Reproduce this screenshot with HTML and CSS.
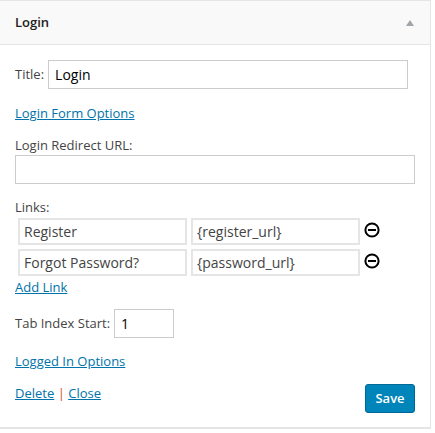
FILE: index.html
```html
<!DOCTYPE html>
<html lang="en">
<head>
<meta charset="utf-8">
<title>Login widget</title>
<link rel="stylesheet" href="styles.css">
</head>
<body>
<div class="widget">
  <div class="widget-top">
    <h3 class="widget-title">Login</h3>
    <span class="arrow"></span>
  </div>
  <form class="widget-body">
    <p class="row row-title">
      <label class="label-inline">Title:</label>
      <input class="field title-field" type="text" value="Login">
    </p>
    <p class="row row-section"><a href="#">Login Form Options</a></p>
    <p class="row row-redirect"><label>Login Redirect URL:</label></p>
    <input class="field redirect-field" type="text">
    <p class="row row-links"><label>Links:</label></p>
    <div class="links">
      <div class="link-row">
        <input class="link-field" type="text" value="Register">
        <input class="link-field" type="text" value="{register_url}">
        <svg class="remove" viewBox="0 0 16 16" width="16" height="16"><circle cx="8" cy="8" r="6.6" fill="none" stroke="#000" stroke-width="2"/><rect x="4" y="7" width="8" height="2" fill="#000"/></svg>
      </div>
      <div class="link-row">
        <input class="link-field" type="text" value="Forgot Password?">
        <input class="link-field" type="text" value="{password_url}">
        <svg class="remove" viewBox="0 0 16 16" width="16" height="16"><circle cx="8" cy="8" r="6.6" fill="none" stroke="#000" stroke-width="2"/><rect x="4" y="7" width="8" height="2" fill="#000"/></svg>
      </div>
    </div>
    <p class="row row-add"><a href="#">Add Link</a></p>
    <p class="row row-tab">
      <label class="label-inline">Tab Index Start:</label>
      <input class="field tab-field" type="text" value="1">
    </p>
    <p class="row row-logged"><a href="#">Logged In Options</a></p>
    <div class="actions">
      <div class="action-links"><a href="#">Delete</a> <span class="sep">|</span> <a href="#">Close</a></div>
      <button class="save" type="button">Save</button>
    </div>
  </form>
</div>
</body>
</html>
```
FILE: styles.css
```css
html, body { margin: 0; padding: 0; background: #fff; }
body { font-family: "Open Sans", sans-serif; font-size: 13px; line-height: 19px; color: #444; height: 433px; overflow: hidden; }
.widget { box-sizing: border-box; width: 431px; height: 429px; border: 1px solid #e5e5e5; border-width: 1px 1px 2px 0; background: #fff; }
.widget-top { display: flex; align-items: center; justify-content: space-between; height: 43px; padding: 0 16px 0 15px; background: #f9f9f9; border-bottom: 1px solid #e5e5e5; }
.widget-title { margin: 0; font-size: 13px; font-weight: 600; color: #222; }
.arrow { width: 0; height: 0; border-left: 4px solid transparent; border-right: 4px solid transparent; border-bottom: 6px solid #a0a5aa; }
.widget-body { padding: 15px 15px 0; }
.row { margin: 0; }
a { color: #0073aa; }
.field, .link-field { box-sizing: border-box; font-family: "Open Sans", sans-serif; margin: 0; background: #fff; outline: 0; border-radius: 0; }
.field { border: 1px solid #ccc; font-size: 14px; padding: 0 7px 0 6px; color: #000; }
.row-title, .row-tab { display: flex; align-items: center; gap: 4px; }
.title-field { width: 360px; height: 29px; }
.row-section { margin-top: 15px; }
.row-redirect { margin-top: 13px; }
.redirect-field { display: block; width: 400px; height: 29px; margin-top: 0; }
.row-links { margin-top: 14px; }
.links { margin-top: 1px; padding-left: 3px; }
.link-row { display: flex; align-items: flex-start; gap: 4px; margin-bottom: 4px; }
.link-field { width: 169px; height: 27px; border: 2px solid #e5e5e5; padding: 0 5px 0 4px; font-size: 14px; color: #444; }
.remove { margin: 4px 0 0; }
.row-add { margin-top: -2px; }
.row-tab { margin-top: 12px; }
.tab-field { width: 60px; height: 29px; }
.row-logged { margin-top: 14px; }
.actions { display: flex; justify-content: space-between; align-items: flex-start; width: 400px; margin-top: 13px; }
.sep { color: #d54e21; }
.save { margin-top: 0; width: 50px; height: 29px; padding: 0 0 2px; background: #0085ba; border: 1px solid #006799; border-radius: 3px; color: #fff; font-family: "Open Sans", sans-serif; font-size: 13px; font-weight: 600; }
```
